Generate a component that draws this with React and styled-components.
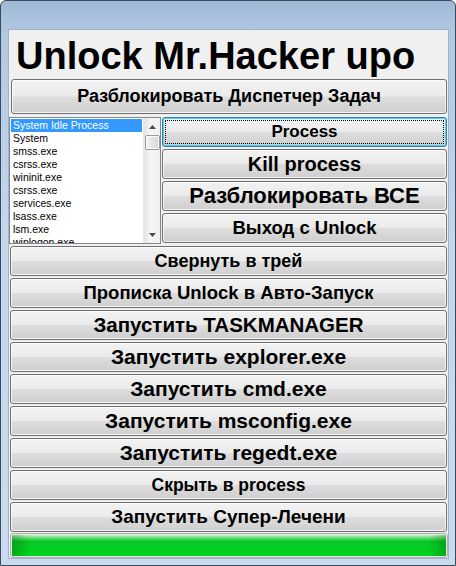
import styled, { createGlobalStyle, css } from "styled-components";

const Global = createGlobalStyle`
  html, body {
    margin: 0;
    padding: 0;
    background: #ffffff;
  }
  * {
    box-sizing: border-box;
  }
`;

const Window = styled.div`
  width: 456px;
  height: 566px;
  border: 1px solid #3b4a5a;
  border-radius: 6px 6px 0 0;
  background: linear-gradient(180deg, #9fb9d6 0%, #b2c9e3 6%, #c2d6ec 40%, #c9dcef 100%);
  padding: 28px 6px 6px 7px;
  display: flex;
`;

const Client = styled.div`
  flex: 1;
  background: #f0f0f0;
  border: 1px solid #9fb3cb;
  display: flex;
  flex-direction: column;
  font-family: "Liberation Sans", Arial, sans-serif;
`;

const Title = styled.div`
  height: 49px;
  padding: 4px 0 0 7px;
  font-size: 38px;
  font-weight: bold;
  color: #000;
  line-height: 44px;
  white-space: nowrap;
`;

const btnBase = css`
  display: flex;
  align-items: center;
  justify-content: center;
  border: 1px solid #707070;
  border-radius: 3px;
  background: linear-gradient(180deg, #f2f2f2 0%, #ebebeb 48%, #dddddd 52%, #cfcfcf 100%);
  box-shadow: inset 0 0 0 1px rgba(255, 255, 255, 0.75);
  color: #000;
  font-family: "Liberation Sans", Arial, sans-serif;
  font-weight: bold;
  white-space: nowrap;
  padding: 0;
  position: relative;
`;

const Button = styled.div`
  ${btnBase};
  height: ${(p) => p.$h || 30}px;
  font-size: ${(p) => p.$size}px;
  margin: ${(p) => p.$margin || "0 0 0 1px"};
  ${(p) =>
    p.$focused &&
    css`
      border-color: #3c7fb1;
      box-shadow: inset 0 0 0 1px #48d0f8;
      &::after {
        content: "";
        position: absolute;
        inset: 2px;
        border: 1px dotted #000;
      }
    `}
`;

const TopButton = styled(Button)`
  margin: 0 1px 3px 2px;
`;

const Middle = styled.div`
  display: flex;
  gap: 1px;
  height: 127px;
  margin-bottom: 2px;
`;

const ListBox = styled.div`
  width: 152px;
  border: 1px solid #828790;
  background: #fff;
  display: flex;
  overflow: hidden;
`;

const Items = styled.div`
  flex: 1;
  padding: 1px 1px 0 1px;
  overflow: hidden;
`;

const Item = styled.div`
  height: 13px;
  line-height: 13px;
  font-family: "Liberation Sans", Arial, sans-serif;
  font-size: 10.5px;
  padding-left: 2px;
  color: ${(p) => (p.$selected ? "#fff" : "#000")};
  background: ${(p) => (p.$selected ? "#3399ff" : "transparent")};
  white-space: nowrap;
`;

const ScrollBar = styled.div`
  width: 17px;
  background: linear-gradient(90deg, #e3e3e3, #f5f5f5 40%, #f0f0f0);
  border-left: 1px solid #e8e8e8;
  display: flex;
  flex-direction: column;
  align-items: center;
`;

const Arrow = styled.div`
  height: 17px;
  width: 100%;
  display: flex;
  align-items: center;
  justify-content: center;
  margin-top: ${(p) => (p.$down ? "auto" : "0")};
`;

const Thumb = styled.div`
  width: 15px;
  height: 15px;
  border: 1px solid #9a9a9a;
  border-radius: 2px;
  background: linear-gradient(90deg, #f3f3f3, #e4e4e4 50%, #d6d6d6);
  box-shadow: inset 0 0 0 1px #fff;
`;

const RightColumn = styled.div`
  flex: 1;
  display: flex;
  flex-direction: column;
  gap: 2px;
  padding-right: 1px;
`;

const Stack = styled.div`
  display: flex;
  flex-direction: column;
  gap: 2px;
  padding-right: 1px;
`;

const Progress = styled.div`
  height: 25px;
  margin: 1px 0 0 1px;
  border: 1px solid #b0b0b0;
  border-radius: 3px;
  background: #e6e6e6;
  padding: 1px;
  display: flex;
`;

const ProgressFill = styled.div`
  flex: 1;
  border-radius: 1px;
  background:
    linear-gradient(90deg, rgba(0, 80, 0, 0.3) 0%, rgba(0, 0, 0, 0) 4%, rgba(0, 0, 0, 0) 96%, rgba(0, 80, 0, 0.3) 100%),
    linear-gradient(180deg, #c8f5c8 0%, #6fe07a 12%, #06c626 30%, #00d41f 100%);
`;

const processes = [
  "System Idle Process",
  "System",
  "smss.exe",
  "csrss.exe",
  "wininit.exe",
  "csrss.exe",
  "services.exe",
  "lsass.exe",
  "lsm.exe",
  "winlogon.exe",
];

const sideButtons = [
  { label: "Process", size: 17, focused: true },
  { label: "Kill process", size: 20 },
  { label: "Разблокировать ВСЕ", size: 22 },
  { label: "Выход с Unlock", size: 18.5 },
];

const mainButtons = [
  { label: "Свернуть в трей", size: 18 },
  { label: "Прописка Unlock в Авто-Запуск", size: 18.5 },
  { label: "Запустить TASKMANAGER", size: 20.5 },
  { label: "Запустить explorer.exe", size: 21 },
  { label: "Запустить cmd.exe", size: 21 },
  { label: "Запустить msconfig.exe", size: 21 },
  { label: "Запустить regedt.exe", size: 21 },
  { label: "Скрыть в process", size: 17.5 },
  { label: "Запустить Супер-Лечени", size: 19 },
];

function ArrowIcon({ down }) {
  return (
    <svg width="7" height="4" viewBox="0 0 7 4">
      <path d={down ? "M0 0 L7 0 L3.5 4 Z" : "M0 4 L7 4 L3.5 0 Z"} fill="#4d4d4d" />
    </svg>
  );
}

export default function App() {
  return (
    <>
      <Global />
      <Window>
        <Client>
          <Title>Unlock Mr.Hacker upo</Title>
          <TopButton $h={36} $size={18}>
            Разблокировать Диспетчер Задач
          </TopButton>
          <Middle>
            <ListBox>
              <Items>
                {processes.map((p, i) => (
                  <Item key={i} $selected={i === 0}>
                    {p}
                  </Item>
                ))}
              </Items>
              <ScrollBar>
                <Arrow>
                  <ArrowIcon />
                </Arrow>
                <Thumb />
                <Arrow $down>
                  <ArrowIcon down />
                </Arrow>
              </ScrollBar>
            </ListBox>
            <RightColumn>
              {sideButtons.map((b) => (
                <Button key={b.label} $size={b.size} $focused={b.focused} $margin="0">
                  {b.label}
                </Button>
              ))}
            </RightColumn>
          </Middle>
          <Stack>
            {mainButtons.map((b) => (
              <Button key={b.label} $size={b.size}>
                {b.label}
              </Button>
            ))}
          </Stack>
          <Progress>
            <ProgressFill />
          </Progress>
        </Client>
      </Window>
    </>
  );
}
